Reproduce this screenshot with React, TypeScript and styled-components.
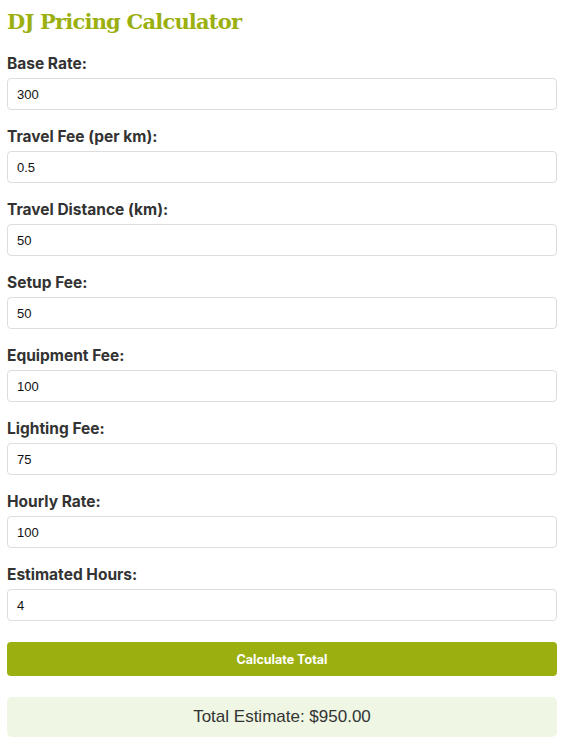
import { useState } from 'react';
import styled, { createGlobalStyle } from 'styled-components';

const Global = createGlobalStyle`
  body {
    margin: 0;
    background: #fff;
  }
`;

const Wrapper = styled.div`
  width: 550px;
  padding: 0 7px;
`;

const Title = styled.h1`
  margin: 0;
  padding-top: 8px;
  font-family: 'DejaVu Serif', 'Liberation Serif', serif;
  font-weight: bold;
  font-size: 21px;
  line-height: 28px;
  letter-spacing: -0.8px;
  color: #9bb010;
  margin-bottom: 18px;
`;

const Field = styled.div`
  margin-bottom: 17px;
`;

const Label = styled.label`
  display: block;
  font-family: Inter, 'Liberation Sans', sans-serif;
  font-weight: 700;
  font-size: 15.5px;
  line-height: 20px;
  color: #333;
  margin-bottom: 4px;
`;

const Input = styled.input`
  box-sizing: border-box;
  display: block;
  width: 100%;
  height: 32px;
  padding: 0 9px;
  border: 1px solid #ddd;
  border-radius: 4px;
  font-family: 'Liberation Sans', Arial, sans-serif;
  font-size: 13px;
  color: #111;
  outline: none;
`;

const Button = styled.button`
  display: block;
  width: 100%;
  height: 34px;
  margin-top: 21px;
  border: none;
  border-radius: 4px;
  background: #9bb010;
  color: #fff;
  font-family: Inter, 'Liberation Sans', sans-serif;
  font-weight: 700;
  font-size: 12.5px;
  cursor: pointer;
`;

const Result = styled.div`
  margin-top: 21px;
  height: 40px;
  border-radius: 5px;
  background: #eff7e4;
  display: flex;
  align-items: center;
  justify-content: center;
  font-family: 'Liberation Sans', Arial, sans-serif;
  font-size: 17px;
  color: #333;
`;

const fields = [
  { key: 'base', label: 'Base Rate:', value: '300' },
  { key: 'travelFee', label: 'Travel Fee (per km):', value: '0.5' },
  { key: 'distance', label: 'Travel Distance (km):', value: '50' },
  { key: 'setup', label: 'Setup Fee:', value: '50' },
  { key: 'equipment', label: 'Equipment Fee:', value: '100' },
  { key: 'lighting', label: 'Lighting Fee:', value: '75' },
  { key: 'hourly', label: 'Hourly Rate:', value: '100' },
  { key: 'hours', label: 'Estimated Hours:', value: '4' },
];

export default function App() {
  const [values, setValues] = useState<Record<string, string>>(
    Object.fromEntries(fields.map((f) => [f.key, f.value]))
  );
  const [total, setTotal] = useState(950);

  const n = (k: string) => parseFloat(values[k]) || 0;
  const calculate = () => {
    setTotal(
      n('base') +
        n('travelFee') * n('distance') +
        n('setup') +
        n('equipment') +
        n('lighting') +
        n('hourly') * n('hours')
    );
  };

  return (
    <Wrapper>
      <Global />
      <Title>DJ Pricing Calculator</Title>
      {fields.map((f) => (
        <Field key={f.key}>
          <Label htmlFor={f.key}>{f.label}</Label>
          <Input
            id={f.key}
            type="text"
            value={values[f.key]}
            onChange={(e) => setValues({ ...values, [f.key]: e.target.value })}
          />
        </Field>
      ))}
      <Button onClick={calculate}>Calculate Total</Button>
      <Result>Total Estimate: ${total.toFixed(2)}</Result>
    </Wrapper>
  );
}
